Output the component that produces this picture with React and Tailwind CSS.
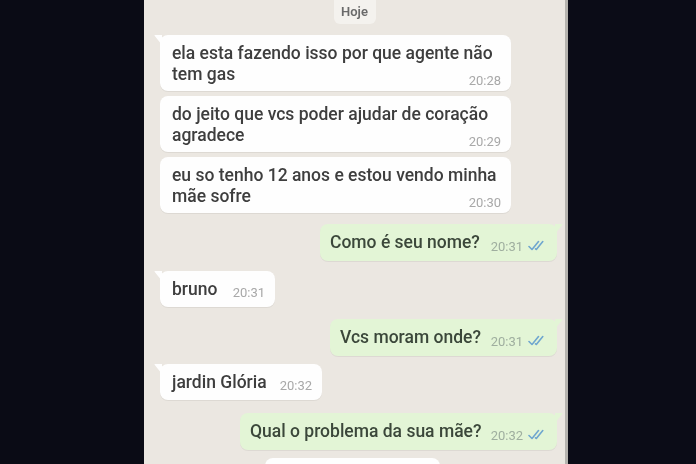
import React from "react";

const font = { fontFamily: "Roboto, 'Noto Sans', 'Liberation Sans', sans-serif" };

function Checks() {
  return (
    <svg width="18" height="11" viewBox="0 0 18 11" className="ml-[5px] mb-[3px]">
      <path d="M1 6.5 L4 9.5 L10.5 1.5" fill="none" stroke="#6fa6cf" strokeWidth="1.6" strokeLinecap="round" strokeLinejoin="round" />
      <path d="M7.5 8.8 L8.3 9.5 L14.8 1.5" fill="none" stroke="#6fa6cf" strokeWidth="1.6" strokeLinecap="round" strokeLinejoin="round" />
    </svg>
  );
}

function TailLeft() {
  return (
    <svg width="8" height="10" viewBox="0 0 8 10" className="absolute -left-[6px] top-0">
      <path d="M8 0 L1 0 Q0 0 0.8 1 L8 10 Z" fill="#fefefe" />
    </svg>
  );
}

function TailRight() {
  return (
    <svg width="8" height="10" viewBox="0 0 8 10" className="absolute -right-[6px] top-0">
      <path d="M0 0 L7 0 Q8 0 7.2 1 L0 10 Z" fill="#e3f5d6" />
    </svg>
  );
}

function InTwo({ line1, line2, time, mt, tail }) {
  return (
    <div className={`relative shrink-0 self-start ml-[16px] w-[351px] h-[56px] bg-[#fefefe] rounded-[8px] pt-[8px] pl-[12px] pr-[10px] flex flex-col shadow-[0_1px_0_rgba(0,0,0,0.06)] ${mt}`}>
      {tail && <TailLeft />}
      <p className="text-[17.5px] leading-[21px] font-medium text-[#3e3e3e] whitespace-nowrap">{line1}</p>
      <div className="flex items-start justify-between">
        <span className="text-[17.5px] leading-[21px] font-medium text-[#3e3e3e]">{line2}</span>
        <span className="mt-[10px] text-[13px] leading-[14px] text-[#a8a8a8]">{time}</span>
      </div>
    </div>
  );
}

function InOne({ text, time, mt, w }) {
  return (
    <div className={`relative shrink-0 self-start ml-[16px] h-[36px] bg-[#fefefe] rounded-[8px] pl-[12px] pr-[10px] flex items-center shadow-[0_1px_0_rgba(0,0,0,0.06)] ${mt} ${w}`}>
      <TailLeft />
      <span className="text-[17.5px] leading-[21px] font-medium text-[#3e3e3e] whitespace-nowrap">{text}</span>
      <span className="ml-auto mt-[8px] text-[13px] leading-[14px] text-[#a8a8a8]">{time}</span>
    </div>
  );
}

function Out({ text, time, mt, w }) {
  return (
    <div className={`relative shrink-0 self-end mr-[8px] h-[37px] bg-[#e3f5d6] rounded-[8px] pl-[10px] pr-[11px] flex items-center shadow-[0_1px_0_rgba(0,0,0,0.06)] ${mt} ${w}`}>
      <TailRight />
      <span className="text-[17.5px] leading-[21px] font-medium text-[#3b473a] whitespace-nowrap">{text}</span>
      <span className="ml-auto mt-[9px] text-[13px] leading-[14px] text-[#9fae9f]">{time}</span>
      <span className="mt-[9px]"><Checks /></span>
    </div>
  );
}

export default function App() {
  return (
    <div className="w-[696px] h-[464px] bg-[#0b0c17] flex overflow-hidden" style={font}>
      <div className="w-[144px] shrink-0 bg-[#0a0b15]" />
      <div className="w-[424px] shrink-0 h-[464px] bg-[#ebe7e1] border-r-[3px] border-[#b5b3ae] flex flex-col overflow-hidden blur-[0.4px]">
        <div className="shrink-0 self-center h-[24px] w-[42px] bg-[#f4f2ee] rounded-b-[6px] flex items-center justify-center">
          <span className="text-[13px] font-semibold text-[#6a6a6a]">Hoje</span>
        </div>
        <InTwo mt="mt-[11px]" tail line1="ela esta fazendo isso por que agente não" line2="tem gas" time="20:28" />
        <InTwo mt="mt-[5px]" line1="do jeito que vcs poder ajudar de coração" line2="agradece" time="20:29" />
        <InTwo mt="mt-[5px]" line1="eu so tenho 12 anos e estou vendo minha" line2="mãe sofre" time="20:30" />
        <Out mt="mt-[11px]" w="w-[237px]" text="Como é seu nome?" time="20:31" />
        <InOne mt="mt-[10px]" w="w-[115px]" text="bruno" time="20:31" />
        <Out mt="mt-[12px]" w="w-[227px]" text="Vcs moram onde?" time="20:31" />
        <InOne mt="mt-[8px]" w="w-[162px]" text="jardin Glória" time="20:32" />
        <Out mt="mt-[13px]" w="w-[317px]" text="Qual o problema da sua mãe?" time="20:32" />
        <div className="shrink-0 self-start ml-[121px] mt-[8px] w-[175px] h-[30px] bg-[#fefefe] rounded-[8px]" />
      </div>
      <div className="flex-1 bg-[#0b0c17]" />
    </div>
  );
}
